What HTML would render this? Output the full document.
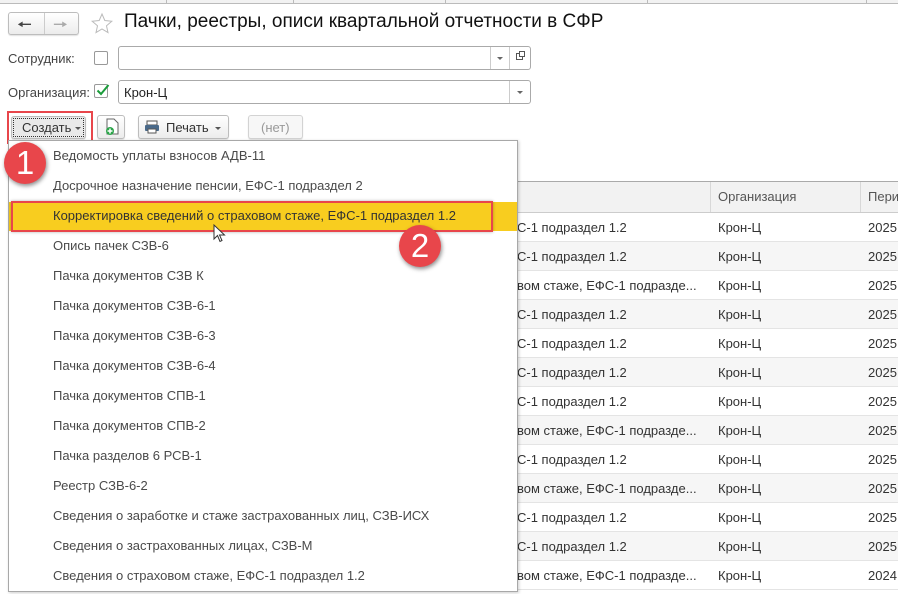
<!DOCTYPE html>
<html><head><meta charset="utf-8"><style>
*{box-sizing:border-box;margin:0;padding:0}
body{width:898px;height:594px;overflow:hidden;background:#fff;font-family:"Liberation Sans",Arial,sans-serif;font-size:13px;color:#333;position:relative}
.a{position:absolute}
.btn{position:absolute;border:1px solid #bdbdbd;border-radius:3px;background:linear-gradient(#fff,#ececec);box-shadow:0 1px 1px rgba(0,0,0,.12)}
.inp{position:absolute;border:1px solid #aaa;border-radius:3px;background:#fff}
.mi{position:absolute;left:53px;font-size:13px;color:#4a4a4a;white-space:nowrap}
.row{position:absolute;left:517px;width:381px;height:29px;border-bottom:1px solid #e4e4e4}
.row span{position:absolute;top:7px;white-space:nowrap;color:#333}
.badge{position:absolute;width:42px;height:42px;border-radius:50%;background:#e8464b;color:#fff;font-size:33px;text-align:center;line-height:42px;box-shadow:1px 2px 4px rgba(0,0,0,.45)}
</style></head><body>
<div class="a" style="left:0;top:0;width:898px;height:4px;border-bottom:1px solid #bbb;background:#f2f2f2"></div>
<div class="a" style="left:166px;top:0;width:1px;height:4px;background:#bbb"></div>
<div class="a" style="left:293px;top:0;width:1px;height:4px;background:#bbb"></div>
<div class="a" style="left:445px;top:0;width:1px;height:4px;background:#bbb"></div>
<div class="a" style="left:647px;top:0;width:1px;height:4px;background:#bbb"></div>
<div class="a" style="left:866px;top:0;width:1px;height:4px;background:#bbb"></div>

<div class="btn" style="left:8px;top:12px;width:71px;height:23px"></div>
<div class="a" style="left:44px;top:13px;width:1px;height:21px;background:#ccc"></div>
<div class="a" style="left:17px;top:12px;font-size:17px;color:#444">&#129044;</div>
<div class="a" style="left:53px;top:12px;font-size:17px;color:#aaa">&#129046;</div>
<svg class="a" style="left:90px;top:12px" width="24" height="22"><polygon points="12,2 14.8,8.5 21.8,9.2 16.5,13.8 18,20.6 12,17 6,20.6 7.5,13.8 2.2,9.2 9.2,8.5" fill="none" stroke="#bbb" stroke-width="1"/></svg>
<div class="a" style="left:124px;top:11px;font-size:19px;color:#111">Пачки, реестры, описи квартальной отчетности в СФР</div>

<div class="a" style="left:8px;top:51px;color:#444">Сотрудник:</div>
<div class="a" style="left:94px;top:51px;width:14px;height:14px;border:1px solid #999;border-radius:2px"></div>
<div class="inp" style="left:118px;top:46px;width:413px;height:24px"></div>
<div class="a" style="left:490px;top:47px;width:1px;height:22px;background:#ccc"></div>
<div class="a" style="left:509px;top:47px;width:1px;height:22px;background:#ccc"></div>
<div class="a" style="left:497px;top:57px;border:3px solid transparent;border-top:3px solid #666;border-bottom:0"></div>
<div class="a" style="left:516px;top:53px;width:7px;height:7px;border:1px solid #555"></div>
<div class="a" style="left:519px;top:51px;width:6px;height:6px;border:1px solid #555;background:#fff"></div>

<div class="a" style="left:8px;top:85px;color:#444">Организация:</div>
<div class="a" style="left:94px;top:84px;width:14px;height:14px;border:1px solid #999;border-radius:2px"></div>
<svg class="a" style="left:95px;top:82px" width="16" height="16"><path d="M2.5 8.5 L6 12 L13.5 3" stroke="#1a9c3a" stroke-width="2" fill="none"/></svg>
<div class="inp" style="left:118px;top:80px;width:413px;height:24px"></div>
<div class="a" style="left:124px;top:85px;color:#222">Крон-Ц</div>
<div class="a" style="left:509px;top:81px;width:1px;height:22px;background:#ccc"></div>
<div class="a" style="left:517px;top:91px;border:3px solid transparent;border-top:3px solid #666;border-bottom:0"></div>

<div class="btn" style="left:11px;top:116px;width:75px;height:23px;background:#e9e9e9"></div>
<div class="a" style="left:13px;top:118px;width:71px;height:19px;border:1px dotted #333"></div>
<div class="a" style="left:22px;top:120px;color:#333">Создать</div>
<div class="a" style="left:75px;top:127px;border:3px solid transparent;border-top:3px solid #555;border-bottom:0"></div>
<div class="a" style="left:7px;top:111px;width:86px;height:33px;border:2px solid #e8464b"></div>

<div class="btn" style="left:97px;top:115px;width:28px;height:24px"></div>
<svg class="a" style="left:104px;top:118px" width="16" height="18"><path d="M3 1h7l4 4v11H3z" fill="#fff" stroke="#666"/><circle cx="6" cy="13" r="4" fill="#2ca44a"/><path d="M6 10.5v5M3.5 13h5" stroke="#fff" stroke-width="1.5"/></svg>
<div class="btn" style="left:138px;top:115px;width:91px;height:24px"></div>
<svg class="a" style="left:144px;top:120px" width="16" height="14"><rect x="3" y="1" width="10" height="4" fill="#fff" stroke="#555"/><rect x="1" y="5" width="14" height="6" rx="1" fill="#4a6a8a"/><rect x="4" y="9" width="8" height="4" fill="#fff" stroke="#555"/></svg>
<div class="a" style="left:166px;top:120px;color:#333">Печать</div>
<div class="a" style="left:215px;top:127px;border:3px solid transparent;border-top:3px solid #555;border-bottom:0"></div>
<div class="btn" style="left:248px;top:115px;width:55px;height:24px;background:#f7f7f7;border-color:#d3d3d3"></div>
<div class="a" style="left:261px;top:120px;color:#999">(нет)</div>

<div class="a" style="left:517px;top:181px;width:381px;height:32px;background:#f2f2f2;border-top:1px solid #aaa;border-bottom:1px solid #ccc"></div>
<div class="a" style="left:710px;top:182px;width:1px;height:30px;background:#d8d8d8"></div>
<div class="a" style="left:860px;top:182px;width:1px;height:30px;background:#d8d8d8"></div>
<div class="a" style="left:718px;top:189px;color:#555">Организация</div>
<div class="a" style="left:868px;top:189px;color:#555">Пери</div>

<div class="row" style="top:213px"><span style="left:0">С-1 подраздел 1.2</span><span style="left:201px">Крон-Ц</span><span style="left:351px">2025</span></div>
<div class="row" style="top:242px;background:#f6f6f6"><span style="left:0">С-1 подраздел 1.2</span><span style="left:201px">Крон-Ц</span><span style="left:351px">2025</span></div>
<div class="row" style="top:271px"><span style="left:0">вом стаже, ЕФС-1 подразде...</span><span style="left:201px">Крон-Ц</span><span style="left:351px">2025</span></div>
<div class="row" style="top:300px;background:#f6f6f6"><span style="left:0">С-1 подраздел 1.2</span><span style="left:201px">Крон-Ц</span><span style="left:351px">2025</span></div>
<div class="row" style="top:329px"><span style="left:0">С-1 подраздел 1.2</span><span style="left:201px">Крон-Ц</span><span style="left:351px">2025</span></div>
<div class="row" style="top:358px;background:#f6f6f6"><span style="left:0">С-1 подраздел 1.2</span><span style="left:201px">Крон-Ц</span><span style="left:351px">2025</span></div>
<div class="row" style="top:387px"><span style="left:0">С-1 подраздел 1.2</span><span style="left:201px">Крон-Ц</span><span style="left:351px">2025</span></div>
<div class="row" style="top:416px;background:#f6f6f6"><span style="left:0">вом стаже, ЕФС-1 подразде...</span><span style="left:201px">Крон-Ц</span><span style="left:351px">2025</span></div>
<div class="row" style="top:445px"><span style="left:0">С-1 подраздел 1.2</span><span style="left:201px">Крон-Ц</span><span style="left:351px">2025</span></div>
<div class="row" style="top:474px;background:#f6f6f6"><span style="left:0">вом стаже, ЕФС-1 подразде...</span><span style="left:201px">Крон-Ц</span><span style="left:351px">2025</span></div>
<div class="row" style="top:503px"><span style="left:0">С-1 подраздел 1.2</span><span style="left:201px">Крон-Ц</span><span style="left:351px">2025</span></div>
<div class="row" style="top:532px;background:#f6f6f6"><span style="left:0">С-1 подраздел 1.2</span><span style="left:201px">Крон-Ц</span><span style="left:351px">2025</span></div>
<div class="row" style="top:561px"><span style="left:0">вом стаже, ЕФС-1 подразде...</span><span style="left:201px">Крон-Ц</span><span style="left:351px">2024</span></div>

<div class="a" style="left:8px;top:140px;width:510px;height:452px;background:#fff;border:1px solid #a8a8a8;box-shadow:1px 1px 3px rgba(0,0,0,.2)"></div>
<div class="a" style="left:9px;top:202px;width:508px;height:29px;background:#f8cd1f"></div>
<div class="a" style="left:11px;top:201px;width:482px;height:31px;border:2px solid #e8464b;box-shadow:0 0 3px rgba(0,0,0,.3)"></div>
<div class="mi" style="top:148px">Ведомость уплаты взносов АДВ-11</div>
<div class="mi" style="top:178px">Досрочное назначение пенсии, ЕФС-1 подраздел 2</div>
<div class="mi" style="top:208px;color:#333">Корректировка сведений о страховом стаже, ЕФС-1 подраздел 1.2</div>
<div class="mi" style="top:238px">Опись пачек СЗВ-6</div>
<div class="mi" style="top:268px">Пачка документов СЗВ К</div>
<div class="mi" style="top:298px">Пачка документов СЗВ-6-1</div>
<div class="mi" style="top:328px">Пачка документов СЗВ-6-3</div>
<div class="mi" style="top:358px">Пачка документов СЗВ-6-4</div>
<div class="mi" style="top:388px">Пачка документов СПВ-1</div>
<div class="mi" style="top:418px">Пачка документов СПВ-2</div>
<div class="mi" style="top:448px">Пачка разделов 6 РСВ-1</div>
<div class="mi" style="top:478px">Реестр СЗВ-6-2</div>
<div class="mi" style="top:508px">Сведения о заработке и стаже застрахованных лиц, СЗВ-ИСХ</div>
<div class="mi" style="top:538px">Сведения о застрахованных лицах, СЗВ-М</div>
<div class="mi" style="top:568px">Сведения о страховом стаже, ЕФС-1 подраздел 1.2</div>

<svg class="a" style="left:213px;top:224px" width="14" height="20"><path d="M1 1v14l3.5-3.5 2.5 6 2-1-2.5-5.5h5z" fill="#fff" stroke="#333"/></svg>

<div class="badge" style="left:4px;top:142px">1</div>
<div class="badge" style="left:399px;top:225px">2</div>
</body></html>
